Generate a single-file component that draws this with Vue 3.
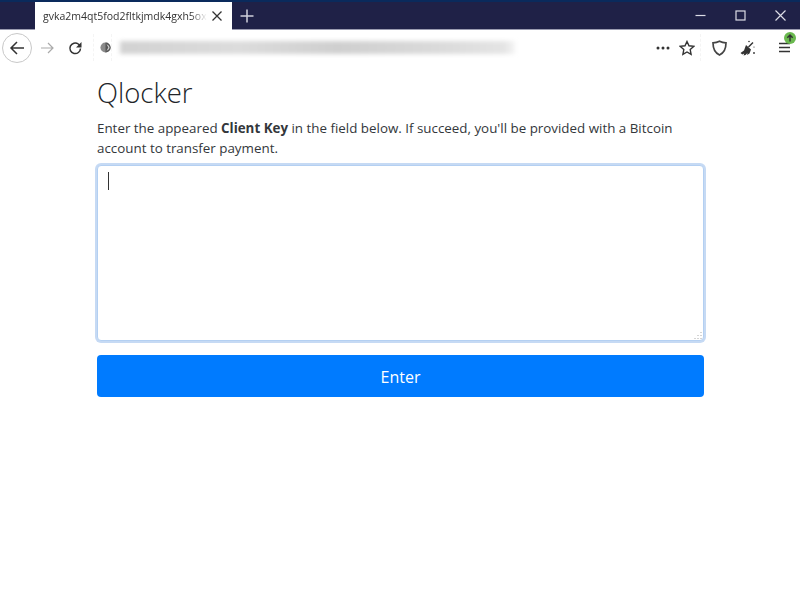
<script setup>
const title = "gvka2m4qt5fod2fltkjmdk4gxh5ox";
</script>

<template>
	<div class="window">
		<div class="tabbar">
			<div class="tab">
				<span class="tab-title">{{ title }}</span>
				<svg class="tab-close" width="12" height="12" viewBox="0 0 12 12"><path d="M1.5 1.5l9 9M10.5 1.5l-9 9" /></svg>
			</div>
			<svg class="new-tab" width="14" height="14" viewBox="0 0 14 14"><path d="M7 0.5v13M0.5 7h13" /></svg>
			<div class="win-buttons">
				<svg width="11" height="11" viewBox="0 0 11 11"><path d="M0.5 5.5h10" /></svg>
				<svg width="11" height="11" viewBox="0 0 11 11"><rect x="1" y="1" width="9" height="9" /></svg>
				<svg width="11" height="11" viewBox="0 0 11 11"><path d="M0.5 0.5l10 10M10.5 0.5l-10 10" /></svg>
			</div>
		</div>
		<div class="toolbar">
			<div class="back">
				<svg width="16" height="16" viewBox="0 0 16 16"><path d="M15 8H2M8 2L2 8l6 6" /></svg>
			</div>
			<svg class="forward" width="15" height="14" viewBox="0 0 15 14"><path d="M1 7h12M8 2l5 5-5 5" /></svg>
			<svg class="reload" width="14" height="14" viewBox="0 0 14 14"><path d="M12.500 7.500A5.300 5.300 0 1 1 10.300 3L12.500 5" /><path class="fill" d="M13.500 1v5.500H8z" /></svg>
			<div class="urlbar">
				<div class="identity">
					<svg width="13" height="13" viewBox="0 0 13 13"><circle cx="6.5" cy="6.5" r="6" fill="#8a8a8a" /><path d="M6.5 0.5a6 6 0 0 1 0 12" fill="#555" /><path d="M8 3a4 4 0 0 1 0 7M9.800 4a4 4 0 0 1 0 5" stroke="#ddd" fill="none" /></svg>
				</div>
				<div class="url-blur"></div>
			</div>
			<div class="page-actions">
				<svg width="14" height="4" viewBox="0 0 14 4"><circle cx="2" cy="2" r="1.500" /><circle cx="7" cy="2" r="1.500" /><circle cx="12" cy="2" r="1.500" /></svg>
				<svg class="outline" width="16" height="16" viewBox="0 0 16 16"><path d="M8 1.500l2 4.300 4.700.6-3.500 3.200.9 4.700L8 12l-4.100 2.300.9-4.700L1.300 6.400 6 5.800z" /></svg>
			</div>
			<div class="tools">
				<svg class="outline shield" width="15" height="16" viewBox="0 0 15 16"><path d="M7.500 1.200C9.500 2.300 11.500 2.800 14 2.800 14 9 12 13 7.500 15 3 13 1 9 1 2.800 3.500 2.800 5.500 2.300 7.500 1.200z" /></svg>
				<svg class="broom" width="16" height="16" viewBox="0 0 16 16"><path class="fill" d="M6 5l5 4.500-1.500 4-2.500 1.500 .5-2-2 2-2 .5 .8-2-2 1-1.800-1.500 3.500-2.500z" /><path d="M8.500 7L13 2.500" /><circle class="fill" cx="14" cy="13" r="0.900" /><circle class="fill" cx="9" cy="1.500" r="0.800" /><circle class="fill" cx="14" cy="7" r="0.600" /></svg>
				<div class="menu">
					<svg width="13" height="11" viewBox="0 0 13 11"><path d="M1 1.500h11M1 5.500h11M1 9.500h11" /></svg>
					<svg class="update" width="12" height="12" viewBox="0 0 12 12"><circle cx="6" cy="6" r="6" /><path d="M6 9.500V3.200M3.300 5.700L6 3l2.700 2.700" /></svg>
				</div>
			</div>
		</div>
		<main class="page">
			<h1>Qlocker</h1>
			<p>Enter the appeared <b>Client Key</b> in the field below. If succeed, you'll be provided with a Bitcoin account to transfer payment.</p>
			<div class="field">
				<span class="caret"></span>
				<svg class="grip" width="8" height="8" viewBox="0 0 8 8"><path d="M7 1v1M7 4v1M7 7v1M4 4v1M4 7v1M1 7v1" /></svg>
			</div>
			<button class="enter">Enter</button>
		</main>
	</div>
</template>

<style scoped>
.window {
	width: 800px;
	height: 595px;
	overflow: hidden;
	background: #fff;
	font-family: "Open Sans", "Noto Sans", sans-serif;
}

/* タブ */
.tabbar {
	display: flex;
	align-items: flex-end;
	height: 30px;
	box-sizing: border-box;
	padding-left: 35px;
	background: #1f2147;
	border-top: 2px solid #0a2a5c;
	border-bottom: 1px solid #9a9bb0;
}
.tab {
	display: flex;
	align-items: center;
	justify-content: space-between;
	box-sizing: border-box;
	width: 197px;
	height: 28px;
	margin-bottom: -1px;
	padding: 0 9px 0 8px;
	background: #fff;
}
.tab-title {
	font-size: 10.500px;
	color: #333;
	white-space: nowrap;
	-webkit-mask-image: linear-gradient(to right, #000 90%, transparent);
	mask-image: linear-gradient(to right, #000 90%, transparent);
}
.tab-close path {
	fill: none;
	stroke: #333;
	stroke-width: 1.300;
}
.new-tab {
	align-self: center;
	margin: 0 0 0 8px;
}
.new-tab path {
	fill: none;
	stroke: #d0d0dc;
	stroke-width: 1.500;
}
.win-buttons {
	display: flex;
	align-self: center;
	align-items: center;
	gap: 29px;
	margin-left: auto;
	padding-right: 14px;
}
.win-buttons svg * {
	fill: none;
	stroke: #dcdce6;
	stroke-width: 1.200;
}

/* ツールバー */
.toolbar {
	display: flex;
	align-items: center;
	height: 35px;
	padding-left: 2px;
}
.back {
	display: flex;
	align-items: center;
	justify-content: center;
	box-sizing: border-box;
	width: 30px;
	height: 30px;
	border: 1px solid #c8c8c8;
	border-radius: 50%;
}
.back path, .forward path, .reload path, .broom path, .menu > svg path {
	fill: none;
	stroke: #333;
	stroke-width: 1.500;
}
.forward {
	margin-left: 8px;
}
.forward path {
	stroke: #aaa;
	stroke-width: 1.200;
}
.reload {
	margin-left: 13px;
}
.reload .fill, .broom .fill {
	fill: #333;
	stroke: none;
}
.urlbar {
	display: flex;
	flex: 1;
	align-items: center;
	margin-left: 11px;
}
.identity {
	display: flex;
	align-items: center;
	box-sizing: border-box;
	width: 19px;
	height: 27px;
	padding-left: 6px;
	border: 1px dashed #f4f4f4;
	border-width: 0 1px;
}
.url-blur {
	width: 395px;
	height: 13px;
	margin-left: 8px;
	background: linear-gradient(to right, #d2d2d2, #dcdcdc 30%, #cfcfcf 55%, #dadada 80%, #e4e4e4 97%, #f4f4f4);
	filter: blur(2px);
}
.page-actions {
	display: flex;
	align-items: center;
	gap: 9px;
	height: 27px;
	padding-right: 5px;
	border-right: 1px dashed #f4f4f4;
	fill: #333;
}
.outline path {
	fill: none;
	stroke: #333;
	stroke-width: 1.400;
}
.shield path {
	stroke: #444;
	stroke-width: 1.700;
}
.tools {
	display: flex;
	align-items: center;
	gap: 13px;
	margin-left: 11px;
	padding-right: 9px;
}
.menu {
	position: relative;
	display: flex;
	margin-left: 9px;
}
.update {
	position: absolute;
	top: -10px;
	right: -5px;
}
.update circle {
	fill: #6ab94f;
}
.update path {
	fill: none;
	stroke: #fff;
	stroke-width: 1.500;
}

/* 本文 */
.page {
	box-sizing: border-box;
	width: 607px;
	margin: 0 0 0 97px;
	color: #33373b;
}
h1 {
	margin: 9px 0 6px;
	font-size: 27.500px;
	font-weight: 300;
	line-height: 38px;
	color: #212529;
}
p {
	margin: 0 0 7px;
	font-size: 13.370px;
	line-height: 20px;
}
.field {
	position: relative;
	box-sizing: border-box;
	height: 176px;
	background: #fff;
	border: 1px solid #b4d0f2;
	border-radius: 4px;
	box-shadow: 0 0 0 2px #c6daf4;
}
.caret {
	position: absolute;
	left: 10px;
	top: 6px;
	width: 1px;
	height: 18px;
	background: #333;
}
.grip {
	position: absolute;
	right: 1px;
	bottom: 1px;
}
.grip path {
	fill: none;
	stroke: #aaa;
}
.enter {
	display: block;
	width: 100%;
	height: 42px;
	margin-top: 14px;
	padding: 1px 0 0;
	font-family: inherit;
	font-size: 16px;
	color: #fff;
	background: #007bff;
	border: 0;
	border-radius: 4px;
}
</style>

<style>
html, body {
	margin: 0;
	background: #fff;
}
</style>
